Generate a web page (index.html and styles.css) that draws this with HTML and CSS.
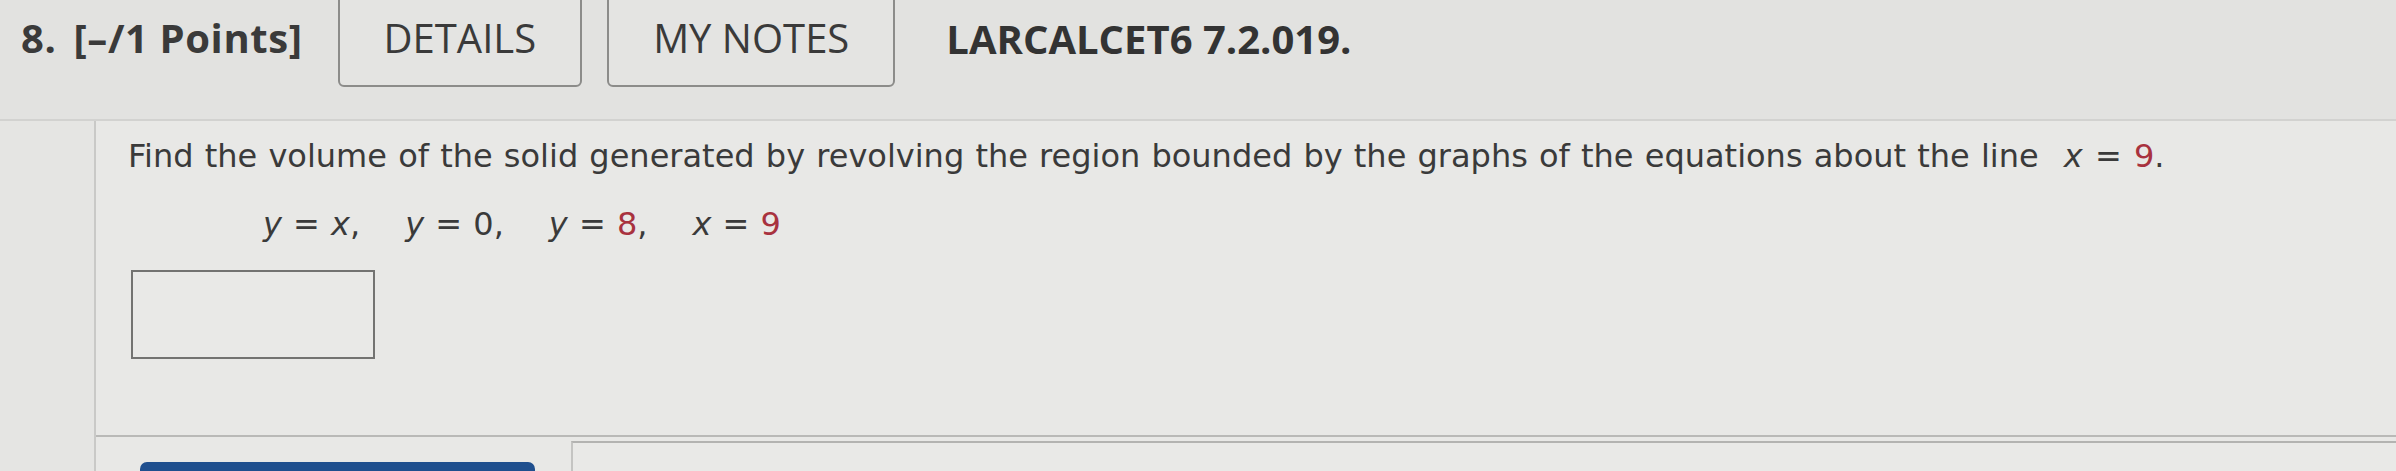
FILE: index.html
```html
<!DOCTYPE html>
<html lang="en">
<head>
<meta charset="utf-8">
<title>Question 8</title>
<link rel="stylesheet" href="styles.css">
</head>
<body>
<div class="page">
  <header class="q-header">
    <div class="q-num">8. <span class="pts">[–/1 Points]</span></div>
    <div class="tabs">
      <div class="tab">DETAILS</div>
      <div class="tab">MY NOTES</div>
    </div>
    <div class="q-code">LARCALCET6 7.2.019.</div>
  </header>
  <div class="q-body">
    <div class="panel">
      <p class="prompt">Find the volume of the solid generated by revolving the region bounded by the graphs of the equations about the line <span class="math inline"><i>x</i> = <span class="red">9</span></span>.</p>
      <div class="math display">
        <span class="eq"><i>y</i> = <i>x</i>,</span>
        <span class="eq"><i>y</i> = 0,</span>
        <span class="eq"><i>y</i> = <span class="red">8</span>,</span>
        <span class="eq"><i>x</i> = <span class="red">9</span></span>
      </div>
      <div class="answer-box"></div>
    </div>
    <div class="footer">
      <div class="actions">
        <div class="submit-btn"></div>
      </div>
      <div class="side-box"></div>
    </div>
  </div>
</div>
</body>
</html>
```
FILE: styles.css
```css
html, body {
  margin: 0;
  padding: 0;
}
body {
  background: #e5e5e3;
  width: 2396px;
  height: 471px;
  overflow: hidden;
  color: #383838;
}
.page {
  display: flex;
  flex-direction: column;
}
.q-header {
  height: 119px;
  border-bottom: 2px solid #d2d2d0;
  background: #e2e2e0;
  display: flex;
  align-items: flex-start;
  padding-left: 21px;
  font-family: "Open Sans", "Liberation Sans", sans-serif;
  font-size: 40px;
  line-height: 54px;
  overflow: hidden;
}
.q-num {
  font-weight: 700;
  margin-top: 11px;
  color: #3a3a3a;
  letter-spacing: 0.6px;
}
.pts {
  margin-left: 6px;
}
.tabs {
  display: flex;
  gap: 25px;
  margin-left: 35px;
  margin-top: -12px;
}
.tab {
  border: 2px solid #8c8c8a;
  border-radius: 0 0 6px 6px;
  padding: 21px 44px 20px;
  font-weight: 400;
  color: #3a3a3a;
  background: #e4e4e2;
}
.q-code {
  font-weight: 700;
  margin-left: 51px;
  margin-top: 12px;
  color: #333;
}
.q-body {
  margin-left: 94px;
  border-left: 2px solid #c9c9c7;
  background: #e8e8e6;
}
.panel {
  border-bottom: 2px solid #b9b9b7;
  padding: 13px 0 0 32px;
  box-sizing: border-box;
  height: 316px;
  font-family: "DejaVu Sans", Verdana, sans-serif;
  font-size: 32px;
  line-height: 45px;
  color: #3a3a3a;
}
.prompt {
  margin: 0;
  word-spacing: 1px;
}
.math i {
  font-style: italic;
}
.math.inline {
  margin-left: 14px;
  word-spacing: 2px;
}
.red {
  color: #a8323e;
}
.math.display {
  margin-top: 23px;
  padding-left: 135px;
  display: flex;
  gap: 45px;
  word-spacing: 1px;
}
.answer-box {
  margin-top: 23px;
  margin-left: 3px;
  width: 244px;
  height: 89px;
  box-sizing: border-box;
  border: 2px solid #737371;
  background: #e9e9e7;
}
.footer {
  display: flex;
  height: 40px;
}
.actions {
  width: 475px;
  padding-top: 25px;
  padding-left: 44px;
  box-sizing: border-box;
}
.submit-btn {
  width: 395px;
  height: 40px;
  background: #1f4f8e;
  border-radius: 7px 7px 0 0;
}
.side-box {
  flex: 1;
  margin-top: 4px;
  border-top: 2px solid #b3b3b1;
  border-left: 2px solid #c4c4c2;
  background: #e9e9e7;
}
```
